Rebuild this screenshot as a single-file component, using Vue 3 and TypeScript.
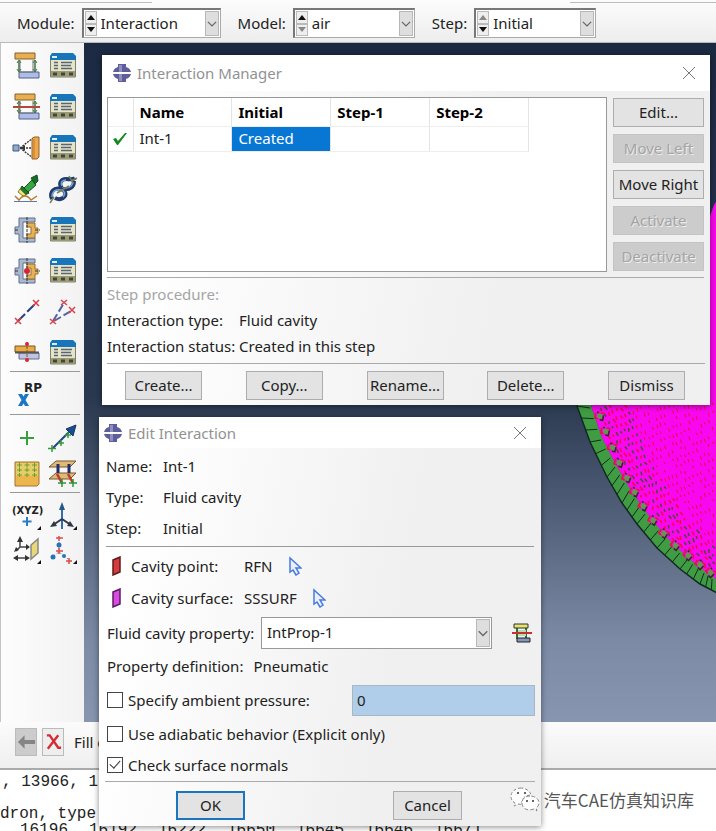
<script setup lang="ts">
import { ref } from 'vue'

interface Picker { id: string; label: string; value: string; upDisabled: boolean; downDisabled: boolean; size: string }
const pickers: Picker[] = [
  { id: 'module', label: 'Module:', value: 'Interaction', upDisabled: false, downDisabled: false, size: 'wide' },
  { id: 'model', label: 'Model:', value: 'air', upDisabled: false, downDisabled: true, size: 'mid' },
  { id: 'step', label: 'Step:', value: 'Initial', upDisabled: true, downDisabled: false, size: 'mid' },
]

interface Tool { icon: string; label: string }
const toolGroups: Tool[][] = [
  [
    { icon: 'contact', label: 'Create interaction' }, { icon: 'manager', label: 'Interaction manager' },
    { icon: 'property', label: 'Create interaction property' }, { icon: 'manager', label: 'Property manager' },
    { icon: 'coupling', label: 'Create constraint' }, { icon: 'manager', label: 'Constraint manager' },
    { icon: 'torch', label: 'Find contact pairs' }, { icon: 'chain', label: 'Connector builder' },
    { icon: 'clamp', label: 'Create contact controls' }, { icon: 'manager', label: 'Contact controls manager' },
    { icon: 'clampdot', label: 'Create initialization' }, { icon: 'manager', label: 'Initialization manager' },
    { icon: 'wire', label: 'Create wire feature' }, { icon: 'wires', label: 'Create connector assignment' },
    { icon: 'section', label: 'Create connector section' }, { icon: 'manager', label: 'Connector section manager' },
  ],
  [{ icon: 'rp', label: 'Create reference point' }],
  [
    { icon: 'plus', label: 'Create attachment point' }, { icon: 'arrow', label: 'Attachment along direction' },
    { icon: 'grid', label: 'Attachment points pattern' }, { icon: 'fastener', label: 'Create fasteners' },
  ],
  [
    { icon: 'xyz', label: 'Create datum point' }, { icon: 'axes', label: 'Create datum axes' },
    { icon: 'plane', label: 'Create datum plane' }, { icon: 'csys', label: 'Create datum system' },
  ],
]

const steps = ['Initial', 'Step-1', 'Step-2']
const sideActions = [
  { text: 'Edit...', off: false }, { text: 'Move Left', off: true }, { text: 'Move Right', off: false },
  { text: 'Activate', off: true }, { text: 'Deactivate', off: true },
]
const rowActions = ['Create...', 'Copy...', 'Rename...', 'Delete...', 'Dismiss']

const ambient = ref(false)
const adiabatic = ref(false)
const normals = ref(true)
const pressure = ref('0')
const nodes = ['16196,', '16192,', '16222,', '16650,', '16645,', '16646,', '16671']

// Rim of the meshed part, as matching outer and inner points
type P = [number, number]
const outer: P[] = [[-2, 150], [1, 206], [14, 242], [31, 277], [46, 303], [61, 324], [81, 348], [104, 369], [124, 384], [141, 393]]
const inner: P[] = [[12, 150], [15, 206], [26, 238], [40, 265], [54, 289], [70, 312], [90, 337], [112, 358], [129, 371], [141, 380]]
const pts = (a: P[]) => a.map(p => p.join(',')).join(' ')
const rim = pts([...outer, ...[...inner].reverse()])
const skin = pts([...inner, [141, 0], [138, 5], [134, 16]])
const spokes: number[][] = []
for (let i = 0; i < outer.length - 1; i++) {
  const n = i === 0 ? 4 : 3
  for (let k = 0; k < n; k++) {
    const t = k / n
    const mix = (a: P[], j: number) => a[i][j] + (a[i + 1][j] - a[i][j]) * t
    spokes.push([mix(outer, 0), mix(outer, 1), mix(inner, 0) - 1, mix(inner, 1) + 2])
  }
}
let seed = 7
const rnd = () => (seed = (seed * 16807) % 2147483647) / 2147483647
const innerX = (y: number) => {
  for (let i = 0; i < inner.length - 1; i++) {
    const [x0, y0] = inner[i], [x1, y1] = inner[i + 1]
    if (y >= y0 && y <= y1) return x0 + ((x1 - x0) * (y - y0)) / (y1 - y0)
  }
  return 141
}
const flecks: { d: string; c: string; w: number }[] = []
for (let r = 0; r < 32; r++) {
  for (let c = 0; c < 36; c++) {
    const x = c * 4 + rnd()
    const y = 208 + r * 8 - c * 1.6 + rnd() * 2
    const depth = x - innerX(y)
    if (y < 200 || depth < 5) continue
    const edge = depth < 38
    if (!edge && (rnd() < 0.18 || (c + r * 2) % 9 === 0)) continue
    const dark = edge && rnd() < 0.5
    flecks.push({
      d: `M${x.toFixed(1)} ${y.toFixed(1)}l${edge ? (rnd() * 3).toFixed(1) : '1'} ${(2 + rnd() * 2).toFixed(1)}`,
      c: dark ? '#4b4a30' : '#f2083f',
      w: edge ? 1.5 : 1,
    })
  }
}
const cells: P[] = [[20, 212], [26, 227], [33, 243], [40, 258], [48, 273], [56, 287], [65, 301], [75, 315], [86, 328], [98, 340], [111, 350], [123, 359], [134, 367]]
</script>

<template>
  <div class="app">
    <header class="toolbar">
      <div v-for="p in pickers" :key="p.id" class="picker">
        <label :for="p.id">{{ p.label }}</label>
        <div class="combo" :class="p.size">
          <span class="spin">
            <button type="button" :disabled="p.upDisabled" :aria-label="'Previous ' + p.id"><svg viewBox="0 0 8 5"><path d="M0 5 4 0l4 5z" /></svg></button>
            <button type="button" :disabled="p.downDisabled" :aria-label="'Next ' + p.id"><svg viewBox="0 0 8 5"><path d="M0 0 4 5 8 0z" /></svg></button>
          </span>
          <select :id="p.id"><option>{{ p.value }}</option></select>
          <svg class="drop" viewBox="0 0 14 28"><path d="m2 12 5 5 5-5" /></svg>
        </div>
      </div>
    </header>

    <div class="work">
      <aside class="tools">
        <div v-for="(g, gi) in toolGroups" :key="gi" class="group" :class="'g' + gi">
          <button v-for="(t, ti) in g" :key="ti" type="button" class="tool" :aria-label="t.label">
            <svg viewBox="0 0 28 28">
              <g v-if="t.icon === 'contact' || t.icon === 'property'">
                <path d="M6 9v11M22 9v11" stroke="#347a3c" stroke-width="1.500" />
                <path d="m4 11 2-3 2 3M4 17l2 3 2-3M20 11l2-3 2 3M20 17l2 3 2-3" fill="none" stroke="#347a3c" />
                <path d="M2 1h20v6H2z" fill="#e9ae4f" stroke="#80602e" />
                <path d="M6 20h20v6H6z" fill="#adbce8" stroke="#526088" />
                <path d="M7 8v12h13V8" fill="none" stroke="#777" />
                <path v-if="t.icon === 'property'" d="M0 14h27" stroke="#b8453b" stroke-width="2" />
              </g>
              <g v-else-if="t.icon === 'manager'">
                <path d="M1.500 7h25v18h-25z" fill="#e5e3c8" stroke="#7f8268" />
                <path d="M1 8V4l2-3h21l3 3v4z" fill="#1875b9" />
                <path d="M3 5h5" stroke="#d7f0ff" stroke-width="2" />
                <path d="M2 19h24v6H2z" fill="#9b9c77" />
                <path d="M4 22h4M12 22h4M20 22h4" stroke="#414638" stroke-width="3" />
                <path d="M5 10.500h4M5 13.500h4M5 16.500h4M12 10.500h11M12 13.500h10M12 16.500h11" stroke="#596575" stroke-width="1.500" />
              </g>
              <g v-else-if="t.icon === 'coupling'">
                <path d="M7 14 20 4M7 14h13M7 14l13 10" stroke="#333" stroke-width="1.300" stroke-dasharray="2 1" />
                <path d="m8 14 4-3v6z" fill="#333" />
                <path d="M0 11h6v6H0z" fill="#8facce" stroke="#3e5c80" />
                <path d="m19 5 2-2h5v20l-2 2h-5z" fill="#eda84c" stroke="#966128" />
                <path d="M21 5v19" stroke="#b87c34" />
              </g>
              <g v-else-if="t.icon === 'torch'">
                <path d="m11 13 8-8 4 5-8 7z" fill="#37a840" stroke="#164c21" />
                <path d="m9 11 7 7-4 2-5-5z" fill="#1d7a2c" stroke="#164c21" />
                <path d="m7 14 6 6-3 1-5-4z" fill="#e9e67b" stroke="#8a7a26" />
                <path d="m18 3 6-3 1 6-3 3z" fill="#167126" stroke="#164c21" />
                <path d="M2 21l4 4q6-8 12 0l6-4" fill="none" stroke="#bd7a2c" stroke-width="1.500" />
                <path d="M1 26.500h23" stroke="#5d79af" />
              </g>
              <g v-else-if="t.icon === 'chain'" fill="none">
                <path d="M3 24C0 17 5 12 12 14c5 2 6 6 2 9-3 2-6 1-8 0M13 13c-4-4-1-9 4-9 4 0 7 1 9-1M14 14c7 1 11-2 11-8" stroke="#203c6d" stroke-width="4" />
                <path d="M3 22c0-6 4-8 9-7 4 1 5 4 2 7M13 11c-2-4 1-6 4-6M17 13c5-1 7-3 7-6" stroke="#7da1d4" stroke-width="1.500" />
                <path d="m1 28 4-6M20 1l4 7M8 18l12-7M22 6l6-3" stroke="#777f59" stroke-width="1.500" />
              </g>
              <g v-else-if="t.icon === 'clamp' || t.icon === 'clampdot'">
                <path d="M6 2h16v4H10v16h12v4H6v-8H2v-7h4z" fill="#aab8cd" stroke="#60718e" />
                <path d="M14 7h8v5h3v5h-3v5h-8v-4h4v-7h-4z" fill="#e6b258" stroke="#976b2c" />
                <path d="M14 1v26M2 14h4M22 14h5" stroke="#333" stroke-dasharray="3 1" />
                <circle v-if="t.icon === 'clampdot'" cx="14" cy="14" r="3" fill="#d92532" />
              </g>
              <g v-else-if="t.icon === 'wire'">
                <path d="M5 23 23 5" stroke="#29417d" stroke-width="2" stroke-dasharray="10 3" />
                <path d="m2 20 6 6m-6 0 6-6M20 2l6 6m-6 0 6-6" stroke="#dc3d43" stroke-width="1.500" />
              </g>
              <g v-else-if="t.icon === 'wires'">
                <path d="M4 23 15 5M5 23l19-11" stroke="#5366a1" stroke-width="2" stroke-dasharray="8 3" />
                <path d="m1 21 6 5m-6 0 6-5M12 2l6 5m-6 0 6-5M20 9l6 6m-6 0 6-6" stroke="#d8444a" stroke-width="1.500" />
              </g>
              <g v-else-if="t.icon === 'section'">
                <path d="M2 7h20v6H2z" fill="#eba943" stroke="#7b5427" />
                <path d="M6 14h20v6H6z" fill="#bfc4e3" stroke="#626b8b" />
                <path d="M2 13.500h24" stroke="#555" stroke-width="2" /><path d="M14 3v20" stroke="#7b5427" stroke-dasharray="3 1" />
                <circle cx="14" cy="5" r="2" fill="#d92532" /><circle cx="14" cy="21" r="2" fill="#d92532" />
              </g>
              <g v-else-if="t.icon === 'rp'">
                <text x="11" y="11" class="glyph rp">RP</text>
                <path d="M5 13h4l7 12h-4zM12 13h4L9 25H5z" fill="#1c78c4" />
              </g>
              <path v-else-if="t.icon === 'plus'" d="M14 6v14M7 13h14" stroke="#35a13d" stroke-width="2" />
              <g v-else-if="t.icon === 'arrow'">
                <path d="M4 23 22 5" stroke="#1d4482" stroke-width="2" />
                <path d="m27 0-3 11-7-7z" fill="#174b95" stroke="#173566" />
                <path d="M3 20v7M-1 23.500h8M9 18h6M12 15v6M16 10h6M19 7v6" stroke="#35983b" stroke-width="1.500" />
              </g>
              <g v-else-if="t.icon === 'grid'">
                <path d="M2 2h24v22l-2 2H2z" fill="#edb64d" stroke="#a47432" />
                <path d="M3 3h22v13H3z" fill="#e5ce67" />
                <path d="M4 5h5M11.500 5h5M19 5h5M4 10h5M11.500 10h5M19 10h5M4 15h5M11.500 15h5M19 15h5M6.500 2.500v5M14 2.500v5M21.500 2.500v5M6.500 8v4M14 8v4M21.500 8v4M6.500 13v4M14 13v4M21.500 13v4" stroke="#6e9a35" />
              </g>
              <g v-else-if="t.icon === 'fastener'">
                <path d="M7 1h20l-6 6H0zM7 13h20l-6 6H0z" fill="#dfba76" stroke="#77582f" />
                <path d="M9 4v9M20 4v9" stroke="#252c68" stroke-width="3" />
                <path d="m8 14 5 9M19 14l5 9" stroke="#bc3b2c" stroke-width="2.500" />
                <path d="M13 19v8M9 23h8M24 19v8M20 23h8" stroke="#2c973a" stroke-width="1.500" />
              </g>
              <g v-else-if="t.icon === 'xyz'">
                <text x="-1" y="10" class="glyph xyz">(XYZ)</text>
                <path d="M14 13v9M9.500 17.500h9" stroke="#2a7bc8" stroke-width="2" />
              </g>
              <g v-else-if="t.icon === 'axes'">
                <path d="M13 3v22" stroke="#326fb0" stroke-width="2" /><path d="m13-2 3 8h-6z" fill="#235889" />
                <path d="m13 15-9 6M13 15l9 6" stroke="#303846" stroke-width="2" />
                <path d="m1 23 4-6 3 5zM25 23l-4-6-3 5z" fill="#303846" />
              </g>
              <g v-else-if="t.icon === 'plane'">
                <path d="m18 7 7-6v14l-7 6z" fill="#ead878" stroke="#858985" stroke-width="1.500" />
                <path d="M7 2v7h7M7 9l-4 4M3 20h11" fill="none" stroke="#444" stroke-width="1.500" />
                <path d="m7-2 3 6H4zM17 9l-4-3v6zM1 14l2-5 3 3zM0 20l5-3v6zM17 20l-5-3v6z" fill="#333" />
              </g>
              <g v-else>
                <path d="M10 4v10l-7 5M10 14l9 7" fill="none" stroke="#8096b7" stroke-dasharray="3 2" />
                <path d="M7 0h7M10-2v5M7 13h7M10 10v6M17 23h6M20 20v6" stroke="#dd4a49" stroke-width="1.500" />
                <circle cx="10" cy="7" r="2.500" fill="#2872ba" /><circle cx="4" cy="19" r="2.500" fill="#2872ba" /><circle cx="15" cy="18" r="2" fill="#2872ba" />
              </g>
              <path v-if="gi === 3" d="M28 22v4h-4z" fill="#111" />
            </svg>
          </button>
        </div>
      </aside>

      <main class="viewport">
        <svg class="mesh" viewBox="0 0 140 400" aria-hidden="true">
          <polygon :points="skin" fill="#f808ee" />
          <polygon :points="rim" fill="#3f9c42" />
          <polyline :points="pts(outer)" fill="none" stroke="#132a20" stroke-width="1.500" />
          <line v-for="(s, i) in spokes" :key="i" :x1="s[0]" :y1="s[1]" :x2="s[2]" :y2="s[3]" stroke="#132a20" />
          <path v-for="(f, i) in flecks" :key="'f' + i" :d="f.d" :stroke="f.c" :stroke-width="f.w" />
          <g v-for="(c, i) in cells" :key="'c' + i" :transform="`translate(${c[0]} ${c[1]}) rotate(${10 + i * 3})`">
            <path d="M0 0h8v7H0z" fill="#f808ee" />
            <path d="M2 1h5v5H2z" fill="#5f9a4a" />
            <path d="M0 1v5h3M5 0h4" fill="none" stroke="#e0143c" stroke-width="1.500" />
            <path d="M8 2v5H5M1 0h2" fill="none" stroke="#28301c" stroke-width="1.500" />
          </g>
        </svg>
      </main>
    </div>

    <div class="prompt">
      <button type="button" class="nav off" disabled aria-label="Back"><svg viewBox="0 0 20 20"><path d="M1 10 8 3v5h11v4H8v5z" fill="#858585" /></svg></button>
      <button type="button" class="nav" aria-label="Cancel procedure"><svg viewBox="0 0 20 20"><path d="M3 3h3l9 13h3M15 3 4 17" fill="none" stroke="#d52c32" stroke-width="2.500" /></svg></button>
      <span>Fill o</span>
    </div>

    <footer class="log">
      <div class="line">, 13966, 1</div>
      <div class="line second">dron, type</div>
      <div class="line nodes"><span v-for="n in nodes" :key="n">{{ n }}</span></div>
    </footer>

    <section class="window manager" role="dialog" aria-labelledby="mgr-title">
      <div class="titlebar">
        <svg class="logo" viewBox="0 0 18 18"><path d="M5 0h8v3q4 1 5 5H0q1-4 5-5zM5 18h8v-3q4-1 5-5H0q1 4 5 5z" fill="#5e5e9c" /><path d="M6 1h3v7H6zM6 10h3v7H6z" fill="#9090c0" /></svg>
        <h2 id="mgr-title">Interaction Manager</h2>
        <button type="button" class="close" aria-label="Close"><svg viewBox="0 0 12 12"><path d="m0 0 12 12M12 0 0 12" /></svg></button>
      </div>
      <div class="mgr-top">
        <div class="sheet">
          <table>
            <thead><tr><th class="tick" aria-label="Status"></th><th>Name</th><th v-for="s in steps" :key="s">{{ s }}</th></tr></thead>
            <tbody><tr>
              <td class="tick"><svg viewBox="0 0 16 14"><path d="m1 7 3-1 2 3 7-8h2L6 13H5z" fill="#138a1c" /></svg></td>
              <td>Int-1</td><td class="picked">Created</td><td></td><td></td>
            </tr></tbody>
          </table>
        </div>
        <div class="side">
          <button v-for="a in sideActions" :key="a.text" type="button" class="btn" :disabled="a.off">{{ a.text }}</button>
        </div>
      </div>
      <dl class="facts">
        <dt class="dim">Step procedure:</dt><dd></dd>
        <dt>Interaction type:</dt><dd>Fluid cavity</dd>
        <dt>Interaction status:</dt><dd>Created in this step</dd>
      </dl>
      <div class="row-actions">
        <button v-for="a in rowActions" :key="a" type="button" class="btn">{{ a }}</button>
      </div>
    </section>

    <section class="window editor" role="dialog" aria-labelledby="edit-title">
      <div class="titlebar">
        <svg class="logo" viewBox="0 0 18 18"><path d="M5 0h8v3q4 1 5 5H0q1-4 5-5zM5 18h8v-3q4-1 5-5H0q1 4 5 5z" fill="#5e5e9c" /><path d="M6 1h3v7H6zM6 10h3v7H6z" fill="#9090c0" /></svg>
        <h2 id="edit-title">Edit Interaction</h2>
        <button type="button" class="close" aria-label="Close"><svg viewBox="0 0 12 12"><path d="m0 0 12 12M12 0 0 12" /></svg></button>
      </div>
      <dl class="ident">
        <dt>Name:</dt><dd>Int-1</dd>
        <dt>Type:</dt><dd>Fluid cavity</dd>
        <dt>Step:</dt><dd>Initial</dd>
      </dl>
      <div class="form">
        <div class="pick">
          <svg class="flag" viewBox="0 0 9 20"><path d="m1 4 7-3v15l-7 3z" fill="#d83a3c" stroke="#5c1c1c" stroke-width="1.500" /></svg>
          <span class="cap">Cavity point:</span><span>RFN</span>
          <button type="button" class="cursor" aria-label="Pick cavity point"><svg viewBox="0 0 14 20"><path d="M2 2v14l3-2 3 5 3-2-3-5h5z" fill="#e8f0ff" stroke="#4a7bdc" stroke-width="1.500" /></svg></button>
        </div>
        <div class="pick">
          <svg class="flag" viewBox="0 0 9 20"><path d="m1 4 7-3v15l-7 3z" fill="#d94be0" stroke="#5a1c60" stroke-width="1.500" /></svg>
          <span class="cap">Cavity surface:</span><span>SSSURF</span>
          <button type="button" class="cursor" aria-label="Pick cavity surface"><svg viewBox="0 0 14 20"><path d="M2 2v14l3-2 3 5 3-2-3-5h5z" fill="#e8f0ff" stroke="#4a7bdc" stroke-width="1.500" /></svg></button>
        </div>
        <div class="prop">
          <label for="prop">Fluid cavity property:</label>
          <div class="combo plain">
            <select id="prop"><option>IntProp-1</option></select>
            <svg class="drop" viewBox="0 0 14 28"><path d="m2 12 5 5 5-5" /></svg>
          </div>
          <button type="button" class="make" aria-label="Create interaction property"><svg viewBox="0 0 20 20"><path d="M5 4v12M14 4v12" stroke="#2f7038" stroke-width="2" /><path d="M2 1h14v4H2z" fill="#e8e36c" stroke="#333" /><path d="M5 15h13v4H5z" fill="#8296c0" stroke="#222" /><path d="M6 7h8v6H6z" fill="#b9dcb4" /><path d="M0 10h20" stroke="#c8322e" stroke-width="2" /></svg></button>
        </div>
        <div class="def"><span>Property definition:</span><span>Pneumatic</span></div>
        <div class="ambient">
          <label class="check"><input v-model="ambient" type="checkbox">Specify ambient pressure:</label>
          <input v-model="pressure" class="value" type="text" aria-label="Ambient pressure">
        </div>
        <label class="check"><input v-model="adiabatic" type="checkbox">Use adiabatic behavior (Explicit only)</label>
        <label class="check last"><input v-model="normals" type="checkbox">Check surface normals</label>
      </div>
      <div class="confirm">
        <button type="button" class="btn ok">OK</button>
        <button type="button" class="btn">Cancel</button>
      </div>
    </section>

    <div class="mark">
      <svg viewBox="0 0 30 26"><path d="M11 1C5 1 1 5 1 9.500c0 3 1.500 5 4 6.500l-1 3 4-2 4 .5C11 12 15 8 21 8 20 4 16 1 11 1z" fill="#fff" stroke="#888" stroke-dasharray="3 2" /><path d="M20 9c-5 0-8 3-8 7s3 7 8 7l4-1 3 2-1-3c2-1 3-3 3-5 0-4-4-7-9-7z" fill="#fff" stroke="#888" stroke-dasharray="4 2" /><path d="M7 6h2M14 6h2M16 14h2M22 14h2" stroke="#666" stroke-width="2" /></svg>
      <span>汽车CAE仿真知识库</span>
    </div>
  </div>
</template>

<style>
body { margin: 0; }
</style>

<style scoped>
.app { position: relative; display: flex; flex-direction: column; min-height: 100vh; overflow: hidden; background: #f5f5f5; color: #222; font: 15px/20px "Noto Sans", "Noto Sans CJK SC", sans-serif; }
.app * { box-sizing: border-box; }
button, select, input { font: inherit; color: inherit; }
button { padding: 0; border: 0; background: none; }
h2, dl, dd { margin: 0; }
svg { display: block; }

.toolbar { display: flex; align-items: flex-start; gap: 17px; height: 43px; padding: 8px 0 0 17px; background: linear-gradient(90deg, #bbb 152px, #fff0 152px, #fff0 calc(100% - 146px), #bbb calc(100% - 146px)) 0 2px / 100% 1px no-repeat, linear-gradient(#fcfcfc, #ededed); border-bottom: 1px solid #b5b9c0; }
.picker { display: flex; align-items: center; gap: 7px; white-space: nowrap; }
.combo { display: flex; align-items: stretch; height: 30px; padding: 1px; background: #fff; border: 1px solid #aaa; border-top: 2px solid #777; border-left: 2px solid #777; }
.combo.wide { width: 139px; }
.combo.mid { width: 122px; }
.spin { display: flex; flex-direction: column; width: 12px; flex: none; }
.spin button { display: flex; align-items: center; justify-content: center; flex: 1; background: #eee; border: 1px solid #bbb; }
.spin svg { width: 8px; height: 5px; fill: #111; }
.spin button:disabled svg { fill: #888; }
select { flex: 1; min-width: 0; padding: 0 4px 2px; border: 0; background: none; appearance: none; outline: 0; }
.drop { flex: none; width: 14px; height: 100%; background: #dedede; border: 1px solid #b8b8b8; }
.drop path { fill: none; stroke: #666; stroke-width: 1.5; }
.picker label { padding-bottom: 1px; }

.work { display: flex; flex: 1; min-height: 0; }
.tools { flex: none; width: 84px; padding: 9px 4px 0 9px; background: linear-gradient(90deg, #fdfdfd, #f2f2f2); border-left: 1px solid #c4c4c4; }
.group { display: grid; grid-template-columns: 28px 28px; column-gap: 8px; row-gap: 13px; padding: 0 3px 4px; border-bottom: 1px solid #999; }
.tool, .tool svg { width: 28px; height: 28px; overflow: visible; }
.g1 { padding-top: 9px; padding-bottom: 5px; }
.g2 { padding-top: 10px; row-gap: 7px; }
.g3 { padding-top: 11px; row-gap: 6px; border-bottom: 0; }
.glyph { font-family: "DejaVu Sans", sans-serif; font-weight: bold; fill: #222; }
.rp { font-size: 12px; }
.xyz { font-size: 10px; }

.viewport { position: relative; flex: 1; background: linear-gradient(#1b2942, #222f4a 20%, #29384f 52%, #7c8aa5 88%, #8795b0); }
.mesh { position: absolute; top: 157px; right: 0; width: 140px; height: 400px; }

.prompt { display: flex; align-items: center; gap: 5px; height: 48px; padding: 0 15px 6px; background: linear-gradient(#fbfbfb, #efefef); border-bottom: 2px solid #aaa; }
.nav { display: grid; place-items: center; width: 22px; height: 28px; background: #eee; border: 1px solid #bbb; }
.nav.off { background: #ccc; }
.nav svg { width: 19px; height: 20px; }
.prompt span { margin-left: 5px; }
.log { height: 61px; overflow: hidden; background: #fff; font: 16px/16px "Liberation Mono", monospace; }
.line { padding: 4px 2px 0; white-space: pre; }
.second { padding-top: 16px; padding-left: 0; }
.nodes { display: flex; padding: 0 0 0 20px; }
.nodes span { flex: none; width: 69px; }

.window { position: absolute; display: flex; flex-direction: column; background: linear-gradient(100deg, #fff 10%, #f0f0f0 65%); box-shadow: 0 1px 6px #0007; }
.titlebar { display: flex; align-items: center; flex: none; gap: 6px; background: #fff; color: #929292; }
.titlebar h2 { flex: 1; font: inherit; }
.logo { width: 18px; height: 18px; }
.close svg { width: 12px; height: 12px; stroke: #777; }
.btn { height: 29px; padding-bottom: 2px; background: #e3e3e3; border: 1px solid #adadad; white-space: nowrap; }
.btn:disabled { background: #ccc; border-color: #c4c4c4; color: #a5a5a5; text-shadow: 1px 1px #eee; }

.manager { top: 55px; left: 102px; right: 6px; height: 350px; }
.manager .titlebar { height: 36px; padding: 0 15px 0 11px; }
.mgr-top { display: flex; gap: 6px; margin: 0 6px 0 5px; padding: 6px 0 5px; border-bottom: 1px solid #aaa; }
.sheet { flex: 1; height: 175px; background: #fff; border: 1px solid #999; }
table { width: 421px; table-layout: fixed; border-collapse: collapse; }
th, td { height: 25px; padding: 0 6px 2px; border-right: 1px solid #e4e4e4; border-bottom: 1px solid #eee; text-align: left; }
th { height: 28px; padding: 1px 6px 0; color: #000; }
.tick { width: 25px; padding: 0 4px; }
.tick svg { width: 16px; height: 14px; }
.picked { background: #0877d4; color: #fff; }
.side { display: flex; flex-direction: column; gap: 7px; width: 91px; padding-top: 1px; }
.facts { display: grid; grid-template-columns: 132px 1fr; grid-auto-rows: 26px; align-items: center; margin: 0 5px; padding: 3px 0 4px; border-bottom: 1px solid #aaa; white-space: nowrap; }
.dim { color: #a5a5a5; }
.row-actions { display: flex; justify-content: space-between; padding: 7px 25px 0 23px; }
.row-actions .btn { width: 77px; }

.editor { top: 417px; left: 99px; width: 442px; height: 409px; }
.editor .titlebar { height: 31px; padding: 0 15px 0 5px; }
.ident { display: grid; grid-template-columns: 57px 1fr; grid-auto-rows: 31px; align-items: center; margin: 0 7px; padding: 2px 1px 3px 0; border-bottom: 1px solid #999; }
.form { display: flex; flex-direction: column; margin: 0 6px; padding: 3px 0 2px 2px; border-bottom: 1px solid #aaa; white-space: nowrap; }
.pick { display: flex; align-items: center; height: 32px; padding-left: 5px; }
.flag { width: 9px; height: 20px; margin-right: 10px; }
.cap { width: 113px; }
.cursor { margin-left: 15px; }
.cursor svg { width: 14px; height: 20px; }
.prop { display: flex; align-items: center; height: 37px; }
.prop label { width: 154px; }
.combo.plain { width: 231px; height: 32px; border: 1px solid #999; }
.make { margin-left: 20px; }
.make svg { width: 20px; height: 20px; }
.def { display: flex; gap: 10px; padding: 5px 0 7px; }
.ambient { display: flex; justify-content: space-between; align-items: center; height: 34px; }
.value { width: 183px; height: 31px; padding: 0 4px; border: 1px solid #a9b7c5; background: #b0cee9; outline: 0; }
.check { display: flex; align-items: center; gap: 5px; height: 33px; }
.check.last { height: 29px; }
.check input { display: grid; place-items: center; width: 16px; height: 16px; margin: 0; appearance: none; background: #fff; border: 1px solid #444; }
.check input:checked::after { content: ""; width: 5px; height: 9px; margin-top: -3px; border: solid #333; border-width: 0 1px 1px 0; transform: rotate(42deg); }
.confirm { display: flex; justify-content: space-between; padding: 9px 79px 0 77px; }
.confirm .btn { width: 69px; }
.confirm .ok { border: 2px solid #1975bd; }

.mark { position: absolute; right: 22px; bottom: 18px; display: flex; align-items: center; gap: 4px; font: 17px/26px "Noto Sans CJK SC", sans-serif; color: #555; text-shadow: 1px 1px #fff; }
.mark svg { width: 30px; height: 26px; }
</style>
